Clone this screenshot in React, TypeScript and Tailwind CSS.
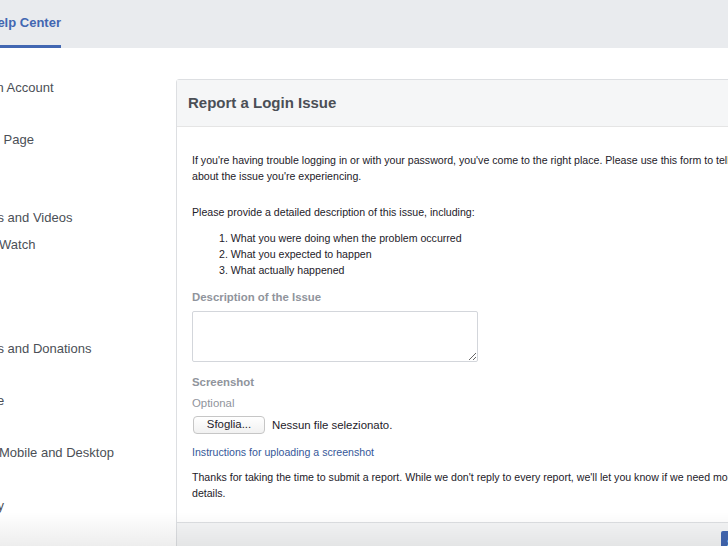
const sideItems = [
  { text: "n Account", ml: "ml-[-3.5px]" },
  { text: "", ml: "" },
  { text: "\u00a0Page", ml: "ml-[0px]" },
  { text: "", ml: "" },
  { text: "", ml: "" },
  { text: "s and Videos", ml: "ml-[-2.5px]" },
  { text: "Watch", ml: "ml-[-1px]" },
  { text: "", ml: "" },
  { text: "", ml: "" },
  { text: "", ml: "" },
  { text: "s and Donations", ml: "ml-[-2.5px]" },
  { text: "", ml: "" },
  { text: "e", ml: "ml-[-3px]" },
  { text: "", ml: "" },
  { text: "Mobile and Desktop", ml: "ml-[-1px]" },
  { text: "", ml: "" },
  { text: "y", ml: "ml-[-2.5px]" },
];

const steps = [
  "What you were doing when the problem occurred",
  "What you expected to happen",
  "What actually happened",
];

export default function App() {
  return (
    <div className="relative w-[728px] h-[546px] overflow-hidden bg-white font-['Liberation_Sans',Arial,sans-serif]">
      {/* top bar */}
      <div className="h-12 bg-[#e9ebee]">
        <div className="inline-block h-12 border-b-[3px] border-[#4267b2] ml-[-12px]">
          <span className="block leading-[45px] text-[13px] font-bold text-[#4267b2]">
            Help Center
          </span>
        </div>
      </div>

      <div className="flex">
        {/* sidebar */}
        <div className="w-[176px] shrink-0 pt-[27px] text-[13px] text-[#4b4f56]">
          {sideItems.map((item, i) => (
            <div key={i} className="h-[26.1px] leading-[26px] whitespace-nowrap">
              <span className={item.ml + " inline-block"}>{item.text}</span>
            </div>
          ))}
        </div>

        {/* card */}
        <div className="mt-[31px] w-[597px] shrink-0 border border-[#dddfe2] rounded-[3px] bg-white">
          <div className="h-[47px] flex items-center px-[11px] bg-[#f5f6f7] border-b border-[#e5e5e5]">
            <h2 className="text-[15px] font-bold text-[#4b4f56]">Report a Login Issue</h2>
          </div>

          <div className="px-[15px] pt-[25px] pb-[21px] text-[10.6px] leading-4 text-[#1d2129]">
            <p>
              If you're having trouble logging in or with your password, you've come to the right
              place. Please use this form to tell us about the issue you're experiencing.
            </p>
            <p className="mt-5">Please provide a detailed description of this issue, including:</p>
            <ol className="mt-[10px] ml-[27px]">
              {steps.map((s, i) => (
                <li key={i}>
                  {i + 1}. {s}
                </li>
              ))}
            </ol>

            <div className="mt-[11px] text-[11.4px] font-bold text-[#90949c]">
              Description of the Issue
            </div>
            <textarea className="mt-[6px] block w-[286px] h-[51px] border border-[#d3d6db] rounded-[2px] outline-none" />

            <div className="mt-3 text-[11.4px] font-bold text-[#90949c]">Screenshot</div>
            <div className="mt-[5px] text-[11.4px] text-[#90949c]">Optional</div>
            <div className="mt-[5px] flex items-center gap-[7px] text-[11.4px]">
              <button className="ml-[1px] w-[72px] h-[18px] rounded-[4px] border border-[#c6c6c6] bg-gradient-to-b from-white to-[#f1f1f1] text-[#1d2129] leading-none">
                Sfoglia...
              </button>
              <span className="text-[#1d2129]">Nessun file selezionato.</span>
            </div>

            <div className="mt-[10px] text-[#365899]">Instructions for uploading a screenshot</div>

            <p className="mt-[9px]">
              Thanks for taking the time to submit a report. While we don't reply to every report,
              we'll let you know if we need more details.
            </p>
          </div>

          <div className="h-[40px] flex justify-end items-start pt-[8px] pr-3 bg-[#f5f6f7] border-t border-[#dddfe2]">
            <button className="w-[39px] h-[24px] rounded-[2px] bg-[#4267b2] text-white text-[11px] font-bold">
              Send
            </button>
          </div>
        </div>
      </div>

      {/* bottom shade */}
      <div className="pointer-events-none absolute left-0 right-0 bottom-0 h-[34px] bg-gradient-to-b from-black/0 to-black/[0.07]" />
    </div>
  );
}
